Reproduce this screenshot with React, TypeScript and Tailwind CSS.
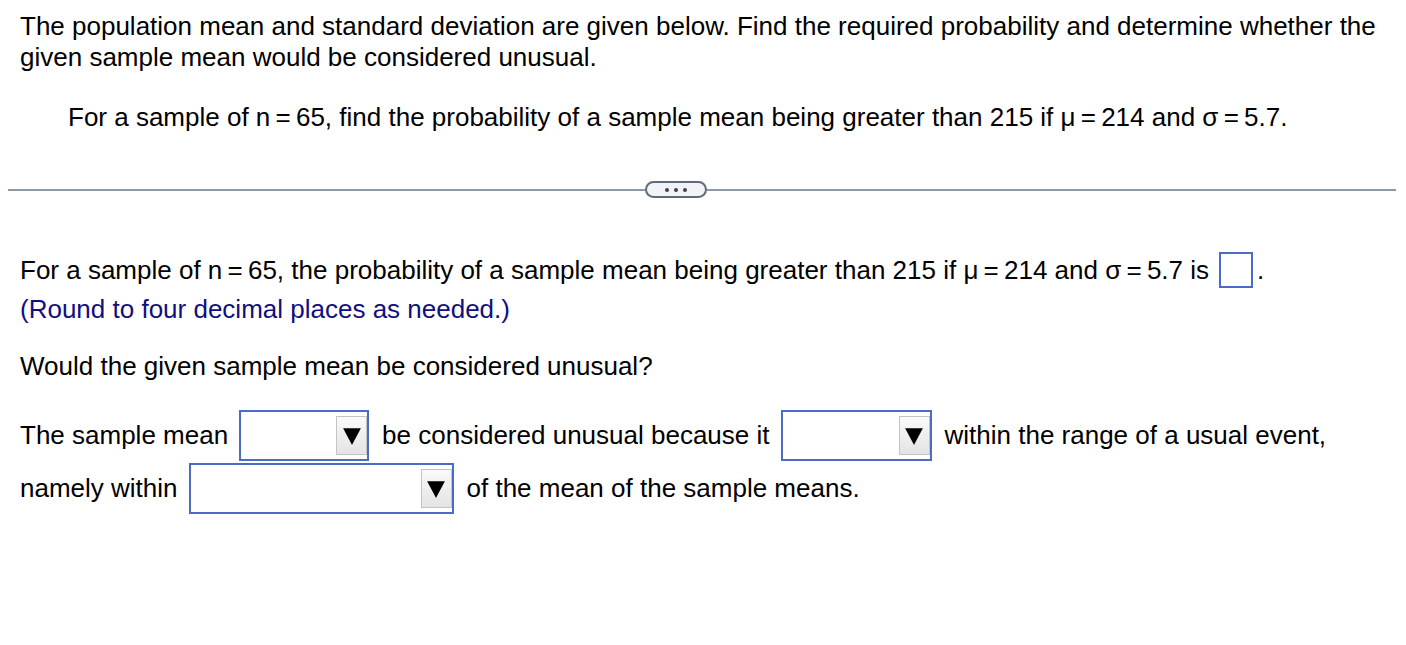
function Dropdown({ width }: { width: string }) {
  return (
    <span
      className={`inline-flex h-[51px] ${width} items-center justify-end border-2 border-[#4a6cc7] bg-white align-middle`}
    >
      <span className="flex h-[39px] w-[31px] items-center justify-center border border-[#c4c4c4] bg-gradient-to-b from-[#fafafa] to-[#e4e4e4]">
        <svg width="20" height="20" viewBox="0 0 18 18">
          <polygon points="1,2 17,2 9,17" fill="#000" />
        </svg>
      </span>
    </span>
  );
}

export default function App() {
  return (
    <div
      className="w-[1406px] h-[645px] bg-white text-black text-[26px] leading-[31px]"
      style={{ fontFamily: '"Liberation Sans", Arial, sans-serif' }}
    >
      <div className="px-[20px] pt-[11px]">
        <p>
          The population mean and standard deviation are given below. Find the required probability and determine whether the
          given sample mean would be considered unusual.
        </p>
        <p className="mt-[29px] pl-[48px]">
          For a sample of n{'\u2009'}={'\u2009'}65, find the probability of a sample mean being greater than 215 if μ{'\u2009'}={'\u2009'}214 and σ{'\u2009'}={'\u2009'}5.7.
        </p>
      </div>

      <div className="mt-[48px] flex items-center pl-[8px] pr-[10px]">
        <div className="h-[2px] w-[637px] bg-[#8e97a4]" />
        <button className="flex h-[17px] w-[62px] items-center justify-center gap-[5px] rounded-full border-2 border-[#5f6a78] bg-[#f1f3f6]">
          <span className="h-[4px] w-[4px] rounded-full bg-[#3c4450]" />
          <span className="h-[4px] w-[4px] rounded-full bg-[#3c4450]" />
          <span className="h-[4px] w-[4px] rounded-full bg-[#3c4450]" />
        </button>
        <div className="h-[2px] flex-1 bg-[#8e97a4]" />
      </div>

      <div className="px-[20px] pt-[54px]">
        <p className="flex items-center">
          <span>
            For a sample of n{'\u2009'}={'\u2009'}65, the probability of a sample mean being greater than 215 if μ{'\u2009'}={'\u2009'}214 and σ{'\u2009'}={'\u2009'}5.7 is
          </span>
          <span className="ml-[10px] inline-block h-[36px] w-[34px] border-2 border-[#4a6cc7]" />
          <span className="ml-[4px]">.</span>
        </p>
        <p className="mt-[6px] text-[#10107e]">(Round to four decimal places as needed.)</p>
        <p className="mt-[26px]">Would the given sample mean be considered unusual?</p>

        <div className="mt-[28px] flex items-center">
          <span>The sample mean</span>
          <span className="ml-[11px]"><Dropdown width="w-[130px]" /></span>
          <span className="ml-[13px]">be considered unusual because it</span>
          <span className="ml-[11px]"><Dropdown width="w-[151px]" /></span>
          <span className="ml-[13px]">within the range of a usual event,</span>
        </div>
        <div className="mt-[2px] flex items-center">
          <span>namely within</span>
          <span className="ml-[11px]"><Dropdown width="w-[265px]" /></span>
          <span className="ml-[13px]">of the mean of the sample means.</span>
        </div>
      </div>
    </div>
  );
}
